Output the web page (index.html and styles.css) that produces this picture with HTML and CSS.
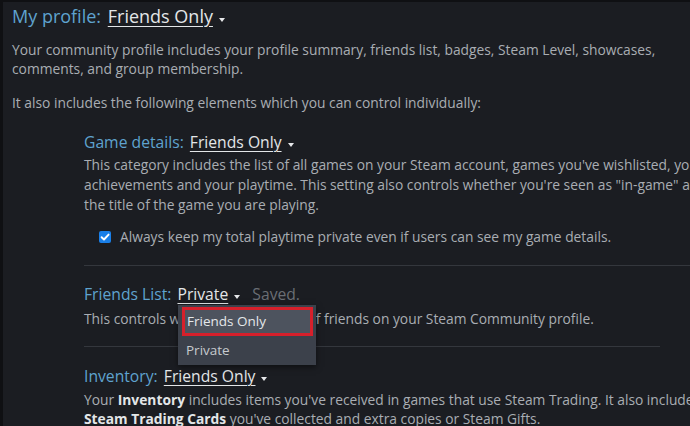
FILE: index.html
```html
<!DOCTYPE html>
<html>
<head>
<meta charset="utf-8">
<link rel="stylesheet" href="styles.css">
</head>
<body>
<div class="page">
  <div class="setting top">
    <span class="label">My profile:</span>
    <span class="value">Friends Only</span><span class="caret"></span>
  </div>
  <p class="intro first">Your community profile includes your profile summary, friends list, badges, Steam Level, showcases,<br>comments, and group membership.</p>
  <p class="intro second">It also includes the following elements which you can control individually:</p>

  <div class="sub">
    <div class="item game">
      <div class="setting">
        <span class="label">Game details:</span>
        <span class="value">Friends Only</span><span class="caret"></span>
      </div>
      <p class="desc">This category includes the list of all games on your Steam account, games you've wishlisted, your<br>achievements and your playtime. This setting also controls whether you're seen as "in-game" and<br>the title of the game you are playing.</p>
      <div class="check">
        <span class="box"><svg viewBox="0 0 12 12" width="12" height="12"><path d="M2.6 6.2 L5 8.5 L9.6 3.6" fill="none" stroke="#fff" stroke-width="1.9" stroke-linecap="round" stroke-linejoin="round"/></svg></span>
        <span class="check-text">Always keep my total playtime private even if users can see my game details.</span>
      </div>
    </div>
    <div class="rule full"></div>
    <div class="item friends">
      <div class="setting">
        <span class="label">Friends List:</span>
        <span class="value">Private</span><span class="caret"></span>
        <span class="saved">Saved.</span>
      </div>
      <p class="desc">This controls who can see your list of friends on your Steam Community profile.</p>
      <div class="menu">
        <div class="opt active">Friends Only</div>
        <div class="opt">Private</div>
      </div>
    </div>
    <div class="rule short"></div>
    <div class="item inventory">
      <div class="setting">
        <span class="label">Inventory:</span>
        <span class="value">Friends Only</span><span class="caret"></span>
      </div>
      <p class="desc tight">Your <b>Inventory</b> includes items you've received in games that use Steam Trading. It also includes any<br><b>Steam Trading Cards</b> you've collected and extra copies or Steam Gifts.</p>
    </div>
  </div>
</div>
</body>
</html>
```

FILE: styles.css
```css
html, body {
  margin: 0;
  padding: 0;
  background: #1b1d22;
  overflow: hidden;
}
body {
  width: 690px;
  height: 426px;
  font-family: "Open Sans", "Noto Sans", sans-serif;
  color: #a9adb3;
}
.page {
  box-sizing: border-box;
  height: 426px;
  border-top: 2px solid #0f1013;
  border-left: 3px solid #0f1013;
  padding-left: 9px;
  white-space: nowrap;
}
.setting {
  font-size: 15.7px;
  line-height: 24px;
  color: #dfe3e6;
}
.setting.top {
  font-size: 18px;
  line-height: 26px;
  margin-top: 1px;
}
.label {
  color: #5fa3cf;
  margin-right: 2px;
}
.value {
  text-decoration: underline;
  text-underline-offset: 3px;
  text-decoration-thickness: 1px;
  color: #e3e6e8;
}
.caret {
  display: inline-block;
  width: 0;
  height: 0;
  margin-left: 6px;
  border-left: 3.5px solid transparent;
  border-right: 3.5px solid transparent;
  border-top: 4px solid #e6e8ea;
  vertical-align: middle;
  position: relative;
  top: 1px;
}
.top .caret { top: 2px; }
.saved {
  color: #6a6e74;
  margin-left: 8px;
}
p { margin: 0; }
.intro {
  font-size: 13.8px;
  line-height: 19px;
}
.intro.first { margin-top: 11px; }
.intro.second { margin-top: 15px; }
.sub {
  margin-left: 72px;
  margin-top: 18px;
}
.desc {
  font-size: 13.8px;
  line-height: 20px;
  margin-top: 1px;
}
.desc b { color: #e3e6e8; font-weight: 700; }
.desc.tight { line-height: 19px; margin-top: 2px; }
.check {
  display: flex;
  align-items: center;
  gap: 9px;
  margin-top: 12px;
  margin-left: 15px;
  font-size: 13.8px;
  line-height: 20px;
}
.box {
  display: inline-flex;
  width: 12px;
  height: 12px;
  border-radius: 2px;
  background: #1a7fe8;
}
.rule {
  height: 1px;
  background: #34373d;
}
.rule.full { margin-top: 18px; }
.rule.short { margin-top: 17px; width: 576px; }
.item.friends {
  position: relative;
  margin-top: 16px;
}
.item.friends .desc { margin-top: 3px; }
.item.inventory { margin-top: 17px; }
.menu {
  position: absolute;
  left: 94px;
  top: 23px;
  width: 138px;
  height: 60px;
  box-sizing: border-box;
  padding: 2px 3px 0 4px;
  background: #3c414b;
  box-shadow: 0 2px 6px rgba(0, 0, 0, 0.5);
  font-size: 13.5px;
  color: #c6cace;
}
.opt {
  height: 29px;
  line-height: 29px;
  padding-left: 4px;
  box-sizing: border-box;
}
.opt.active {
  border: 3px solid #d6202b;
  background: #4d535e;
  color: #e4e7ea;
  line-height: 23px;
  padding-left: 2px;
}
.opt + .opt {
  line-height: 28px;
}
```
